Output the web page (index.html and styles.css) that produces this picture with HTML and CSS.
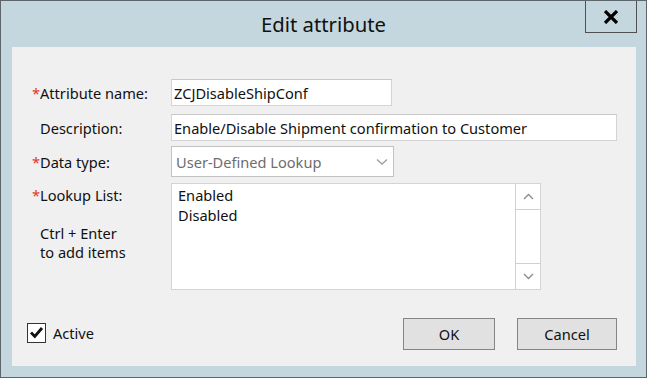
FILE: index.html
```html
<!DOCTYPE html>
<html lang="en">
<head>
    <meta charset="UTF-8">
    <title>Edit attribute</title>
    <link rel="stylesheet" href="styles.css">
</head>
<body>
    <div class="window">
        <div class="titlebar">
            <span></span>
            <span class="title">Edit attribute</span>
            <button class="close" title="Close">
                <svg width="16" height="14" viewBox="0 0 16 14"><path d="M2 1 L14 13 M14 1 L2 13" stroke="#000" stroke-width="3.2" fill="none"/></svg>
            </button>
        </div>

        <div class="panel">
            <div class="row">
                <label class="label"><span class="star">*</span>Attribute name:</label>
                <input class="field field-name" type="text" value="ZCJDisableShipConf">
            </div>
            <div class="row row-desc">
                <label class="label">Description:</label>
                <input class="field field-desc" type="text" value="Enable/Disable Shipment confirmation to Customer">
            </div>
            <div class="row row-type">
                <label class="label"><span class="star">*</span>Data type:</label>
                <div class="select">
                    <span>User-Defined Lookup</span>
                    <svg width="12" height="8" viewBox="0 0 12 8"><path d="M1 1.5 L6 6 L11 1.5" stroke="#a0a0a0" stroke-width="1.4" fill="none"/></svg>
                </div>
            </div>
            <div class="row row-list">
                <div class="label-stack">
                    <label class="label"><span class="star">*</span>Lookup List:</label>
                    <p class="hint">Ctrl + Enter<br>to add items</p>
                </div>
                <div class="listbox">
                    <div class="items">
                        <div>Enabled</div>
                        <div>Disabled</div>
                    </div>
                    <div class="scrollbar">
                        <div class="arrow">
                            <svg width="11" height="7" viewBox="0 0 11 7"><path d="M1 6 L5.5 1.5 L10 6" stroke="#8a8a8a" stroke-width="1.3" fill="none"/></svg>
                        </div>
                        <div class="track"></div>
                        <div class="arrow">
                            <svg width="11" height="7" viewBox="0 0 11 7"><path d="M1 1 L5.5 5.5 L10 1" stroke="#8a8a8a" stroke-width="1.3" fill="none"/></svg>
                        </div>
                    </div>
                </div>
            </div>

            <div class="footer">
                <label class="check">
                    <span class="box">
                        <svg width="15" height="13" viewBox="0 0 15 13"><path d="M2 6.5 L5.8 10.5 L13 2" stroke="#111" stroke-width="2.8" fill="none"/></svg>
                    </span>
                    Active
                </label>
                <div class="buttons">
                    <button class="btn btn-ok">OK</button>
                    <button class="btn btn-cancel">Cancel</button>
                </div>
            </div>
        </div>
    </div>
</body>
</html>
```

FILE: styles.css
```css
body { margin: 0; font-family: 'Noto Sans', 'Open Sans', sans-serif; font-size: 14.6px; color: #111; background: #c4d7de; }
.window { width: 647px; height: 378px; box-sizing: border-box; border: 1px solid #5c666b; background: #c4d7de; display: flex; flex-direction: column; }

.titlebar { height: 46px; display: grid; grid-template-columns: 1fr auto 1fr; }
.title { align-self: center; font-size: 20.3px; color: #111; margin-top: 0; }
.close { justify-self: end; width: 52px; height: 32px; margin-right: 9px; padding: 0; background: transparent; border: 1px solid #505050; border-top: none; display: flex; align-items: center; justify-content: center; }

.panel { flex: 1; margin: 0 10px 11px 11px; background: #f0f0f0; padding: 32px 19px 16px 20px; display: flex; flex-direction: column; }
.row { display: flex; align-items: center; }
.row-desc { margin-top: 8px; }
.row-type { margin-top: 5px; }
.row-list { margin-top: 6px; align-items: flex-start; }

.label { width: 139px; flex-shrink: 0; white-space: nowrap; }
.label::before { content: ""; display: inline-block; width: 8px; }
.star { color: #e8312e; display: inline-block; width: 8px; margin-left: -8px; }
.label-stack { width: 139px; flex-shrink: 0; padding-top: 2px; }
.hint { margin: 19px 0 0 8px; line-height: 19px; }

.field { height: 27px; box-sizing: border-box; border: 1px solid #d4d4d4; border-top-color: #c8c8c8; background: #fff; font: inherit; color: #111; padding: 0 2px; outline: none; }
.field-name { width: 221px; }
.field-desc { width: 446px; }

.select { width: 223px; height: 31px; box-sizing: border-box; border: 1px solid #c2c2c2; background: #fff; color: #6d6d6d; display: flex; align-items: center; justify-content: space-between; padding: 0 5px 0 4px; }

.listbox { width: 370px; height: 107px; box-sizing: border-box; border: 1px solid #d4d4d4; background: #fff; display: flex; }
.items { flex: 1; padding: 1px 6px; line-height: 20px; }
.scrollbar { width: 24px; border-left: 1px solid #d0d0d0; display: flex; flex-direction: column; }
.arrow { height: 25px; display: flex; align-items: center; justify-content: center; }
.arrow:first-child { border-bottom: 1px solid #d0d0d0; }
.arrow:last-child { border-top: 1px solid #d0d0d0; }
.track { flex: 1; }

.footer { margin-top: auto; display: flex; align-items: center; justify-content: space-between; }
.check { display: flex; align-items: center; gap: 7px; margin-left: -5px; margin-top: -3px; }
.box { width: 19px; height: 20px; box-sizing: border-box; border: 1px solid #333; background: #fff; display: flex; align-items: center; justify-content: center; }
.buttons { display: flex; gap: 22px; }
.btn { height: 32px; box-sizing: border-box; background: #e1e1e1; border: 1px solid #858585; font: inherit; color: #111; padding: 0; }
.btn-ok { width: 92px; }
.btn-cancel { width: 100px; }
```
